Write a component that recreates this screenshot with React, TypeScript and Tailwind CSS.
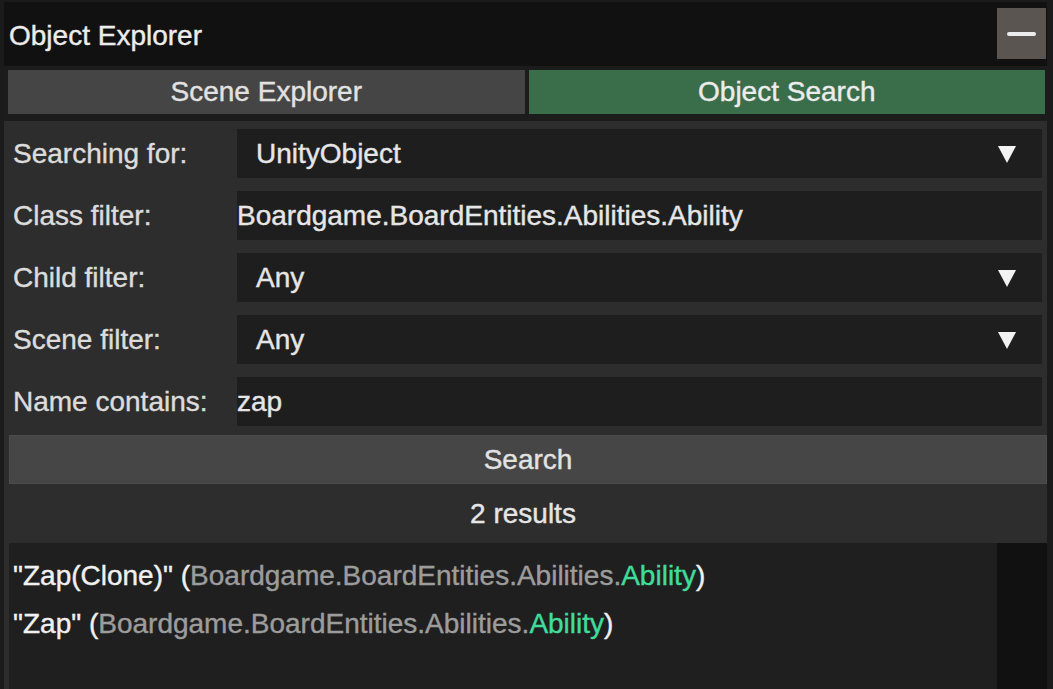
import React from 'react';

const font = { fontFamily: '"Liberation Sans", Arial, sans-serif' };

function Caret() {
  return (
    <svg width="18" height="18" viewBox="0 0 18 18" className="shrink-0">
      <polygon points="0,1 18,1 9,18" fill="#f2f2f2" />
    </svg>
  );
}

function Row({ label, children }: { label: string; children: React.ReactNode }) {
  return (
    <div className="flex h-[49px] items-stretch">
      <div className="flex w-[224px] shrink-0 items-center text-[#dcdcdc]">{label}</div>
      {children}
    </div>
  );
}

function Dropdown({ value }: { value: string }) {
  return (
    <div className="flex flex-1 items-center justify-between bg-[#1e1e1e] pl-[19px] pr-[26px] text-[#e6e6e6]">
      <span>{value}</span>
      <Caret />
    </div>
  );
}

function Field({ value }: { value: string }) {
  return <div className="flex flex-1 items-center bg-[#1e1e1e] text-[#e6e6e6]">{value}</div>;
}

function Result({ name }: { name: string }) {
  return (
    <div className="flex h-[48px] items-center whitespace-nowrap">
      <span className="text-[#f0f0f0]">"{name}" (</span>
      <span className="text-[#9c9c9c]">Boardgame.BoardEntities.Abilities.</span>
      <span className="text-[#3fdc9c]">Ability</span>
      <span className="text-[#f0f0f0]">)</span>
    </div>
  );
}

export default function App() {
  return (
    <div
      className="h-[689px] w-[1053px] overflow-hidden bg-[#1b1b1b] text-[28px] leading-none [-webkit-text-stroke:0.4px]"
      style={font}
    >
      <div className="flex h-full flex-col pl-[4px] pr-[6px] pt-[2px]">
        {/* title bar */}
        <div className="flex h-[64px] shrink-0 items-start justify-between bg-[#111111] pl-[5px] pr-[1px]">
          <span className="mt-[20px] text-[#ececec]">Object Explorer</span>
          <button className="mt-[6px] flex h-[51px] w-[49px] items-center justify-center bg-[#5a5551]">
            <span className="block h-[4px] w-[29px] rounded-sm bg-[#ececec]" />
          </button>
        </div>

        {/* tabs */}
        <div className="flex h-[55px] shrink-0 gap-[4px] bg-[#1c1c1c] pl-[4px] pr-[2px] pt-[4px] pb-[7px]">
          <div className="flex flex-1 items-center justify-center bg-[#454545] text-[#e2e2e2]">Scene Explorer</div>
          <div className="flex flex-1 items-center justify-center bg-[#3a6e4b] text-[#ececec]">Object Search</div>
        </div>

        {/* search panel */}
        <div className="flex flex-1 flex-col bg-[#2d2d2d] pt-[8px] pr-[5px]">
          <div className="flex flex-col gap-[13px] pl-[9px]">
            <Row label="Searching for:">
              <Dropdown value="UnityObject" />
            </Row>
            <Row label="Class filter:">
              <Field value="Boardgame.BoardEntities.Abilities.Ability" />
            </Row>
            <Row label="Child filter:">
              <Dropdown value="Any" />
            </Row>
            <Row label="Scene filter:">
              <Dropdown value="Any" />
            </Row>
            <Row label="Name contains:">
              <Field value="zap" />
            </Row>
          </div>

          <div className="mt-[9px] -mr-[5px] ml-[5px] flex h-[49px] shrink-0 items-center justify-center border border-[#4c4c4c] bg-[#464646] text-[#e2e2e2]">
            Search
          </div>

          <div className="flex h-[59px] shrink-0 items-center justify-center text-[#e6e6e6]">2 results</div>

          <div className="-mr-[5px] ml-[5px] flex flex-1 bg-[#1f1f1f]">
            <div className="flex-1 pl-[4px] pt-[9px]">
              <Result name="Zap(Clone)" />
              <Result name="Zap" />
            </div>
            <div className="w-[50px] bg-[#111111]" />
          </div>
        </div>
      </div>
    </div>
  );
}
